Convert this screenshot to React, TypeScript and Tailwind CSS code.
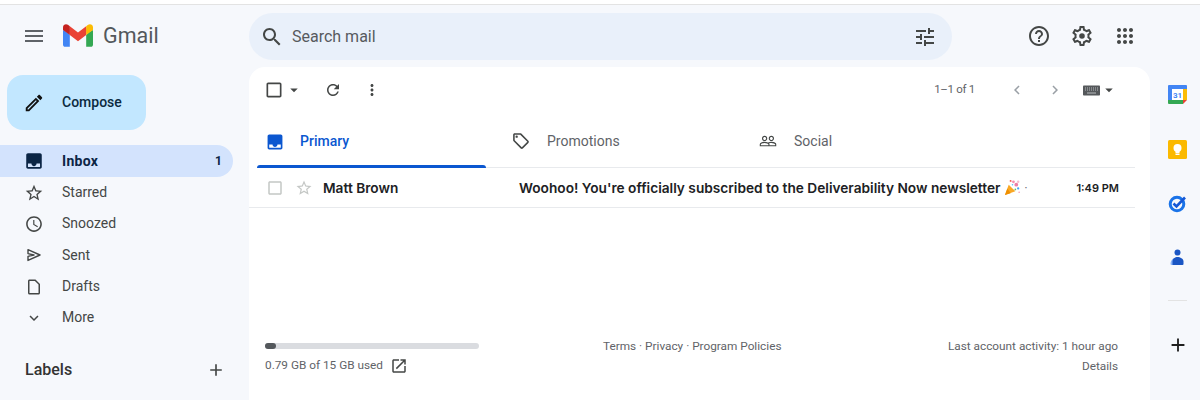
import React from 'react'

const paths = {
  menu: 'M3 18h18v-2H3v2zm0-5h18v-2H3v2zm0-7v2h18V6H3z',
  search:
    'M15.5 14h-.79l-.28-.27C15.41 12.59 16 11.11 16 9.5 16 5.91 13.09 3 9.5 3S3 5.91 3 9.5 5.91 16 9.5 16c1.61 0 3.09-.59 4.23-1.57l.27.28v.79l5 4.99L20.49 19l-4.99-5zm-6 0C7.01 14 5 11.99 5 9.5S7.01 5 9.5 5 14 7.01 14 9.5 11.99 14 9.5 14z',
  tune: 'M3 17v2h6v-2H3zM3 5v2h10V5H3zm10 16v-2h8v-2h-8v-2h-2v6h2zM7 9v2H3v2h4v2h2V9H7zm14 4v-2H11v2h10zm-6-4h2V7h4V5h-4V3h-2v6z',
  help: 'M11 18h2v-2h-2v2zm1-16C6.48 2 2 6.48 2 12s4.48 10 10 10 10-4.48 10-10S17.52 2 12 2zm0 18c-4.41 0-8-3.59-8-8s3.59-8 8-8 8 3.59 8 8-3.59 8-8 8zm0-14c-2.21 0-4 1.79-4 4h2c0-1.1.9-2 2-2s2 .9 2 2c0 2-3 1.75-3 5h2c0-2.25 3-2.5 3-5 0-2.21-1.79-4-4-4z',
  settings:
    'M19.43 12.98c.04-.32.07-.64.07-.98 0-.34-.03-.66-.07-.98l2.11-1.65c.19-.15.24-.42.12-.64l-2-3.46c-.09-.16-.26-.25-.44-.25-.06 0-.12.01-.17.03l-2.49 1c-.52-.4-1.08-.73-1.69-.98l-.38-2.65C14.46 2.18 14.25 2 14 2h-4c-.25 0-.46.18-.49.42l-.38 2.65c-.61.25-1.17.59-1.69.98l-2.49-1c-.06-.02-.12-.03-.18-.03-.17 0-.34.09-.43.25l-2 3.46c-.13.22-.07.49.12.64l2.11 1.65c-.04.32-.07.65-.07.98 0 .33.03.66.07.98l-2.11 1.65c-.19.15-.24.42-.12.64l2 3.46c.09.16.26.25.44.25.06 0 .12-.01.17-.03l2.49-1c.52.4 1.08.73 1.69.98l.38 2.65c.03.24.24.42.49.42h4c.25 0 .46-.18.49-.42l.38-2.65c.61-.25 1.17-.59 1.69-.98l2.49 1c.06.02.12.03.18.03.17 0 .34-.09.43-.25l2-3.46c.12-.22.07-.49-.12-.64l-2.11-1.65zm-1.98-1.71c.04.31.05.52.05.73 0 .21-.02.43-.05.73l-.14 1.13.89.7 1.08.84-.7 1.21-1.27-.51-1.04-.42-.9.68c-.43.32-.84.56-1.25.73l-1.06.43-.16 1.13-.2 1.35h-1.4l-.19-1.35-.16-1.13-1.06-.43c-.43-.18-.83-.41-1.23-.71l-.91-.7-1.06.43-1.27.51-.7-1.21 1.08-.84.89-.7-.14-1.13c-.03-.31-.05-.54-.05-.74s.02-.43.05-.73l.14-1.13-.89-.7-1.08-.84.7-1.21 1.27.51 1.04.42.9-.68c.43-.32.84-.56 1.25-.73l1.06-.43.16-1.13.2-1.35h1.39l.19 1.35.16 1.13 1.06.43c.43.18.83.41 1.23.71l.91.7 1.06-.43 1.27-.51.7 1.21-1.07.85-.89.7.14 1.13zM12 9.2a2.8 2.8 0 1 0 0 5.6 2.8 2.8 0 0 0 0-5.6z',
  apps: 'M6 8c1.1 0 2-.9 2-2s-.9-2-2-2-2 .9-2 2 .9 2 2 2zm6 12c1.1 0 2-.9 2-2s-.9-2-2-2-2 .9-2 2 .9 2 2 2zm-6 0c1.1 0 2-.9 2-2s-.9-2-2-2-2 .9-2 2 .9 2 2 2zm0-6c1.1 0 2-.9 2-2s-.9-2-2-2-2 .9-2 2 .9 2 2 2zm6 0c1.1 0 2-.9 2-2s-.9-2-2-2-2 .9-2 2 .9 2 2 2zm4-8c0 1.1.9 2 2 2s2-.9 2-2-.9-2-2-2-2 .9-2 2zm-4 2c1.1 0 2-.9 2-2s-.9-2-2-2-2 .9-2 2 .9 2 2 2zm6 6c1.1 0 2-.9 2-2s-.9-2-2-2-2 .9-2 2 .9 2 2 2zm0 6c1.1 0 2-.9 2-2s-.9-2-2-2-2 .9-2 2 .9 2 2 2z',
  edit: 'M14.06 9.02l.92.92L5.92 19H5v-.92l9.06-9.06M17.66 3c-.25 0-.51.1-.7.29l-1.83 1.83 3.75 3.75 1.83-1.83c.39-.39.39-1.02 0-1.41l-2.34-2.34c-.2-.2-.45-.29-.71-.29zm-3.6 3.19L3 17.25V21h3.75L17.81 9.94l-3.75-3.75z',
  inbox:
    'M19 3H5c-1.1 0-2 .9-2 2v14c0 1.1.9 2 2 2h14c1.1 0 2-.9 2-2V5c0-1.1-.9-2-2-2zM5 15h4c0 1.66 1.34 3 3 3s3-1.34 3-3h4v4H5z',
  star: 'M22 9.24l-7.19-.62L12 2 9.19 8.63 2 9.24l5.46 4.73L5.82 21 12 17.27 18.18 21l-1.63-7.03L22 9.24zM12 15.4l-3.76 2.27 1-4.28-3.32-2.88 4.38-.38L12 6.1l1.71 4.04 4.38.38-3.32 2.88 1 4.28L12 15.4z',
  clock:
    'M11.99 2C6.47 2 2 6.48 2 12s4.47 10 9.99 10C17.52 22 22 17.52 22 12S17.52 2 11.99 2zM12 20c-4.42 0-8-3.58-8-8s3.58-8 8-8 8 3.58 8 8-3.58 8-8 8zm.5-13H11v6l5.25 3.15.75-1.23-4.5-2.67z',
  draft: 'M14 2H6c-1.1 0-1.99.9-1.99 2L4 20c0 1.1.89 2 1.99 2H18c1.1 0 2-.9 2-2V8l-6-6zM6 20V4h7.17L18 8.83V20H6z',
  expand: 'M16.59 8.59L12 13.17 7.41 8.59 6 10l6 6 6-6z',
  add: 'M19 13h-6v6h-2v-6H5v-2h6V5h2v6h6v2z',
  refresh:
    'M17.65 6.35C16.2 4.9 14.21 4 12 4c-4.42 0-7.99 3.58-7.99 8s3.57 8 7.99 8c3.73 0 6.84-2.55 7.73-6h-2.08c-.82 2.33-3.04 4-5.65 4-3.31 0-6-2.69-6-6s2.69-6 6-6c1.66 0 3.14.69 4.22 1.78L13 11h7V4l-2.35 2.35z',
  more: 'M12 8c1.1 0 2-.9 2-2s-.9-2-2-2-2 .9-2 2 .9 2 2 2zm0 2c-1.1 0-2 .9-2 2s.9 2 2 2 2-.9 2-2-.9-2-2-2zm0 6c-1.1 0-2 .9-2 2s.9 2 2 2 2-.9 2-2-.9-2-2-2z',
  tag: 'M21.41 11.58l-9-9C12.05 2.22 11.55 2 11 2H4c-1.1 0-2 .9-2 2v7c0 .55.22 1.05.59 1.42l9 9c.36.36.86.58 1.41.58s1.05-.22 1.41-.59l7-7c.37-.36.59-.86.59-1.41s-.23-1.06-.59-1.42zM13 20.01L4 11V4h7v-.01l9 9-7 7.02zM6.5 5A1.5 1.5 0 1 0 6.5 8 1.5 1.5 0 1 0 6.5 5z',
  people:
    'M16.5 13c-1.2 0-3.07.34-4.5 1-1.43-.67-3.3-1-4.5-1C5.33 13 1 14.08 1 16.25V19h22v-2.75c0-2.17-4.33-3.25-6.5-3.25zm-4 4.5h-10v-1.25c0-.54 2.56-1.75 5-1.75s5 1.21 5 1.75v1.25zm9 0H14v-1.25c0-.46-.2-.86-.52-1.22.88-.3 1.96-.53 3.02-.53 2.44 0 5 1.21 5 1.75v1.25zM7.5 12c1.93 0 3.5-1.57 3.5-3.5S9.43 5 7.5 5 4 6.57 4 8.5 5.57 12 7.5 12zm0-5.5c1.1 0 2 .9 2 2s-.9 2-2 2-2-.9-2-2 .9-2 2-2zm9 5.5c1.93 0 3.5-1.57 3.5-3.5S18.43 5 16.5 5 13 6.57 13 8.5s1.57 3.5 3.5 3.5zm0-5.5c1.1 0 2 .9 2 2s-.9 2-2 2-2-.9-2-2 .9-2 2-2z',
  open: 'M19 19H5V5h7V3H5c-1.11 0-2 .9-2 2v14c0 1.1.89 2 2 2h14c1.1 0 2-.9 2-2v-7h-2v7zM14 3v2h3.59l-9.83 9.83 1.41 1.41L19 6.41V10h2V3h-7z',
  left: 'M15.41 7.41L14 6l-6 6 6 6 1.41-1.41L10.83 12z',
  right: 'M10 6L8.59 7.41 13.17 12l-4.58 4.59L10 18l6-6z',
  drop: 'M7 10l5 5 5-5z',
  checkbox: 'M19 5v14H5V5h14m0-2H5c-1.1 0-2 .9-2 2v14c0 1.1.9 2 2 2h14c1.1 0 2-.9 2-2V5c0-1.1-.9-2-2-2z',
}

function Icon({ name, className }: { name: keyof typeof paths; className: string }) {
  return (
    <svg viewBox="0 0 24 24" className={`shrink-0 fill-current ${className}`}>
      <path d={paths[name]} fillRule="evenodd" />
    </svg>
  )
}

function SentIcon() {
  return (
    <svg viewBox="0 0 18 18" className="w-[18px] h-[18px] shrink-0">
      <path d="M3 3.6 15 9 3 14.4V10.4L9 9 3 7.6z" fill="none" stroke="#444746" strokeWidth="1.4" strokeLinejoin="round" />
    </svg>
  )
}

function GmailLogo() {
  return (
    <svg viewBox="0 0 256 193" className="w-[30px] h-[23px] shrink-0">
      <path fill="#4285F4" d="M58.182 192.05V93.14L27.507 65.077 0 49.504v125.091c0 9.658 7.825 17.455 17.455 17.455h40.727Z" />
      <path fill="#34A853" d="M197.818 192.05h40.727c9.659 0 17.455-7.826 17.455-17.455V49.505l-31.156 17.837-27.026 25.798v98.91Z" />
      <path fill="#EA4335" d="m58.182 93.14-4.174-38.647 4.174-36.989L128 69.868l69.818-52.364 4.669 34.992-4.669 40.644L128 145.504z" />
      <path fill="#FBBC04" d="M197.818 17.504V93.14L256 49.504V26.231c0-21.585-24.64-33.89-41.89-20.945l-16.292 12.218Z" />
      <path fill="#C5221F" d="M0 49.504l26.759 20.07L58.182 93.14V17.504L41.89 5.286C24.61-7.66 0 4.646 0 26.23v23.273Z" />
    </svg>
  )
}

function KeyboardIcon() {
  return (
    <svg viewBox="0 0 17 11" className="w-[17px] h-[11px] shrink-0">
      <rect width="17" height="10" y="0.5" rx="0.8" fill="#55585b" />
      <path d="M2 3h13M2 5h13" stroke="#b9bcbf" strokeWidth="1" strokeDasharray="1 1" />
      <path d="M4 8h9" stroke="#b9bcbf" strokeWidth="1" />
    </svg>
  )
}

function PartyPopper() {
  return (
    <svg viewBox="0 0 18 18" className="w-[17px] h-[17px] shrink-0">
      <path fill="#f9a825" d="M1 17 5 6l7 7z" />
      <path fill="#ef8f00" d="M1 17 3.5 10l3.5 5z" />
      <circle cx="10" cy="3" r="1.5" fill="#f48fb1" />
      <circle cx="13" cy="6" r="2" fill="#ec7fa6" />
      <circle cx="15" cy="3" r="1.3" fill="#f8bbd0" />
      <circle cx="7" cy="2" r="1" fill="#ef5350" />
      <circle cx="15" cy="10" r="1.2" fill="#42a5f5" />
      <circle cx="12" cy="11" r="0.9" fill="#66bb6a" />
      <circle cx="16" cy="14" r="0.8" fill="#f48fb1" />
      <circle cx="9" cy="6" r="0.8" fill="#4fc3f7" />
    </svg>
  )
}

function CalendarIcon() {
  return (
    <svg viewBox="0 0 19 19" className="w-[19px] h-[19px]">
      <path fill="#4285f4" d="M1 0h17a1 1 0 0 1 1 1v3h-4V4H4v11H0V1a1 1 0 0 1 1-1z" />
      <rect x="4" y="4" width="11" height="11" fill="#fff" />
      <path fill="#fbbc04" d="M15 4h4v11h-4z" />
      <path fill="#34a853" d="M0 15h15v4H1a1 1 0 0 1-1-1z" />
      <path fill="#ea4335" d="M15 15h4l-4 4z" />
      <text x="9.5" y="13" textAnchor="middle" fontSize="8" fontWeight="700" fontFamily="Roboto, sans-serif" fill="#4285f4">
        31
      </text>
    </svg>
  )
}

function KeepIcon() {
  return (
    <svg viewBox="0 0 19 19" className="w-[19px] h-[19px]">
      <rect width="19" height="19" rx="1.5" fill="#fbb900" />
      <circle cx="9.5" cy="8" r="4" fill="#fff" />
      <rect x="7.5" y="11" width="4" height="2" fill="#fff" />
      <rect x="7.5" y="13.5" width="4" height="1.5" fill="#fff" />
    </svg>
  )
}

function TasksIcon() {
  return (
    <svg viewBox="0 0 19 19" className="w-[19px] h-[19px]">
      <circle cx="9" cy="10" r="6.8" fill="none" stroke="#1a73e8" strokeWidth="3" />
      <path d="M5.5 9.5 8.5 12.5 17 3.5" fill="none" stroke="#1558d6" strokeWidth="2.6" />
    </svg>
  )
}

function ContactsIcon() {
  return (
    <svg viewBox="0 0 19 19" className="w-[19px] h-[19px]">
      <circle cx="9.5" cy="4.5" r="3" fill="#1a56c4" />
      <path fill="#8ab4f8" d="M2.5 16c0-3 2-6 5-6v7H3.5a1 1 0 0 1-1-1z" />
      <path fill="#1a56c4" d="M4.5 17v-3.5C4.5 10.5 7 9 9.5 9s6 1.5 6 4.5V16a1 1 0 0 1-1 1z" />
    </svg>
  )
}

const navItems: { label: string; icon?: keyof typeof paths; iconClass?: string }[] = [
  { label: 'Starred', icon: 'star', iconClass: 'scale-[1.1]' },
  { label: 'Snoozed', icon: 'clock', iconClass: 'scale-[1.05]' },
  { label: 'Sent' },
  { label: 'Drafts', icon: 'draft', iconClass: 'scale-[1]' },
  { label: 'More', icon: 'expand', iconClass: 'scale-[1]' },
]

export default function App() {
  return (
    <div className="h-[400px] overflow-hidden flex flex-col bg-[#f6f8fc] font-['Roboto',sans-serif] text-[#444746]">
      <div className="h-[5px] bg-white border-b border-[#e3e3e3] shrink-0" />

      {/* HEADER */}
      <div className="h-[62px] flex shrink-0">
        <div className="w-[249px] flex items-center pl-[22px] pb-[1px] shrink-0">
          <Icon name="menu" className="w-6 h-6 text-[#5f6368]" />
          <div className="ml-[16px] pl-[1px]">
            <GmailLogo />
          </div>
          <span className="ml-[10px] pt-[1px] text-[21.5px] text-[#54585c] leading-none">Gmail</span>
        </div>
        <div className="mt-[8px] w-[703px] h-[47px] rounded-full bg-[#e9f0fa] flex items-center pl-[11px] pr-[15px]">
          <Icon name="search" className="w-6 h-6 text-[#444746]" />
          <span className="ml-[8px] text-[16px] text-[#575a5e]">Search mail</span>
          <Icon name="tune" className="w-6 h-6 text-[#444746] ml-auto" />
        </div>
        <div className="flex items-center pb-[1px] ml-[75px] gap-[19px]">
          <Icon name="help" className="w-6 h-6 text-[#444746]" />
          <Icon name="settings" className="w-6 h-6 text-[#444746]" />
          <Icon name="apps" className="w-6 h-6 text-[#444746]" />
        </div>
      </div>

      <div className="flex flex-1 min-h-0">
        {/* SIDEBAR */}
        <div className="w-[249px] shrink-0 pt-[8px]">
          <div className="ml-[7px] w-[139px] h-[55px] rounded-2xl bg-[#c2e7ff] flex items-center pl-[16px]">
            <Icon name="edit" className="w-[22px] h-[22px] text-[#111]" />
            <span className="ml-[17px] text-[14px] font-medium text-[#0b2a40]">Compose</span>
          </div>
          <div className="mt-[15px]">
            <div className="w-[233px] h-[32px] rounded-r-full bg-[#d3e3fd] flex items-center pl-[25px] pr-[11px] text-[#0b2545]">
              <Icon name="inbox" className="w-[18px] h-[18px] scale-[1.15]" />
              <span className="ml-[19px] text-[14px] font-bold tracking-[0.3px]">Inbox</span>
              <span className="ml-auto text-[12px] font-bold">1</span>
            </div>
            {navItems.map(item => (
              <div key={item.label} className="h-[31.3px] flex items-center pl-[25px]">
                {item.icon ? (
                  <Icon name={item.icon} className={`w-[18px] h-[18px] text-[#444746] ${item.iconClass}`} />
                ) : (
                  <SentIcon />
                )}
                <span className="ml-[19px] text-[14px]">{item.label}</span>
              </div>
            ))}
          </div>
          <div className="mt-[25px] w-[233px] pl-[25px] pr-[8px] flex items-center justify-between">
            <span className="text-[16px] font-medium text-[#333]">Labels</span>
            <Icon name="add" className="w-[18px] h-[18px] scale-[1.1] text-[#444746]" />
          </div>
        </div>

        {/* MAIN */}
        <div className="w-[901px] shrink-0 bg-white rounded-t-2xl pr-[15px]">
          <div className="h-[46px] flex items-center pl-[15px]">
            <Icon name="checkbox" className="w-[20px] h-[20px] text-[#444746]" />
            <Icon name="drop" className="w-[18px] h-[18px] text-[#444746] ml-[1px]" />
            <Icon name="refresh" className="w-[18px] h-[18px] text-[#444746] ml-[21px]" />
            <Icon name="more" className="w-[18px] h-[18px] text-[#444746] ml-[21px]" />
            <span className="ml-auto text-[11.5px] tracking-[-0.3px] text-[#5f6368]">1–1 of 1</span>
            <Icon name="left" className="w-[18px] h-[18px] text-[#9aa0a6] ml-[33px]" />
            <Icon name="right" className="w-[18px] h-[18px] text-[#9aa0a6] ml-[20px]" />
            <div className="ml-[19px]">
              <KeyboardIcon />
            </div>
            <Icon name="drop" className="w-[18px] h-[18px] text-[#444746] mr-[17px]" />
          </div>

          <div className="h-[55px] flex border-b border-[#e8eaed] ml-[8px]">
            <div className="w-[247px] h-[55px] flex flex-col">
              <div className="flex-1 flex items-center pl-[9px] pt-[5px] text-[#0b57d0]">
                <Icon name="inbox" className="w-[18px] h-[18px] scale-[1.1]" />
                <span className="ml-[16px] text-[14px] font-medium">Primary</span>
              </div>
              <div className="w-[229px] h-[3px] rounded-t-[3px] bg-[#0b57d0]" />
            </div>
            <div className="w-[247px] flex items-center pl-[8px] pt-[2px]">
              <Icon name="tag" className="w-[18px] h-[18px] scale-[1.05] text-[#444746]" />
              <span className="ml-[17px] text-[14px] text-[#5f6368]">Promotions</span>
            </div>
            <div className="flex items-center pl-[8px] pt-[2px]">
              <Icon name="people" className="w-[18px] h-[18px] text-[#444746]" />
              <span className="ml-[17px] text-[14px] text-[#5f6368]">Social</span>
            </div>
          </div>

          <div className="h-[40px] flex items-center border-b border-[#e8eaed] text-[#202124] pl-[17px] pr-[16px] font-['Inter',sans-serif]">
            <Icon name="checkbox" className="w-[18px] h-[18px] text-[#c4c7c5]" />
            <Icon name="star" className="w-[18px] h-[18px] text-[#c4c7c5] ml-[11px]" />
            <span className="ml-[10px] w-[196px] pt-[1px] text-[13.7px] font-semibold">Matt Brown</span>
            <span className="pt-[1px] text-[13.7px] font-semibold">
              Woohoo! You're officially subscribed to the Deliverability Now newsletter
            </span>
            <span className="ml-[4px]">
              <PartyPopper />
            </span>
            <span className="ml-[3px] text-[10px] text-[#5f6368]">·</span>
            <span className="ml-auto pt-[1px] text-[11px] font-semibold">1:49 PM</span>
          </div>

          <div className="mt-[135px] pl-[16px] pr-[17px] flex text-[11.8px] text-[#5f6368]">
            <div className="w-[214px] shrink-0">
              <div className="h-[6px] rounded-full bg-[#dadce0]">
                <div className="w-[11px] h-[6px] rounded-full bg-[#54585c]" />
              </div>
              <div className="mt-[8px] flex items-center whitespace-nowrap">
                <span>0.79 GB of 15 GB used</span>
                <Icon name="open" className="w-[18px] h-[18px] text-[#444746] ml-[7px]" />
              </div>
            </div>
            <div className="ml-[124px] -mt-[7px] leading-[20px]">Terms · Privacy · Program Policies</div>
            <div className="ml-auto -mt-[7px] text-right leading-[20px]">
              <div>Last account activity: 1 hour ago</div>
              <div>Details</div>
            </div>
          </div>
        </div>

        {/* RIGHT RAIL */}
        <div className="w-[50px] shrink-0 pl-[5px] pt-[18px] flex flex-col items-center">
          <CalendarIcon />
          <div className="mt-[36px]">
            <KeepIcon />
          </div>
          <div className="mt-[35px]">
            <TasksIcon />
          </div>
          <div className="mt-[35px]">
            <ContactsIcon />
          </div>
          <div className="mt-[33px] w-[19px] h-[1px] bg-[#e3e3e3]" />
          <Icon name="add" className="w-[22px] h-[22px] text-[#1f1f1f] mt-[33px]" />
        </div>
      </div>
    </div>
  )
}
